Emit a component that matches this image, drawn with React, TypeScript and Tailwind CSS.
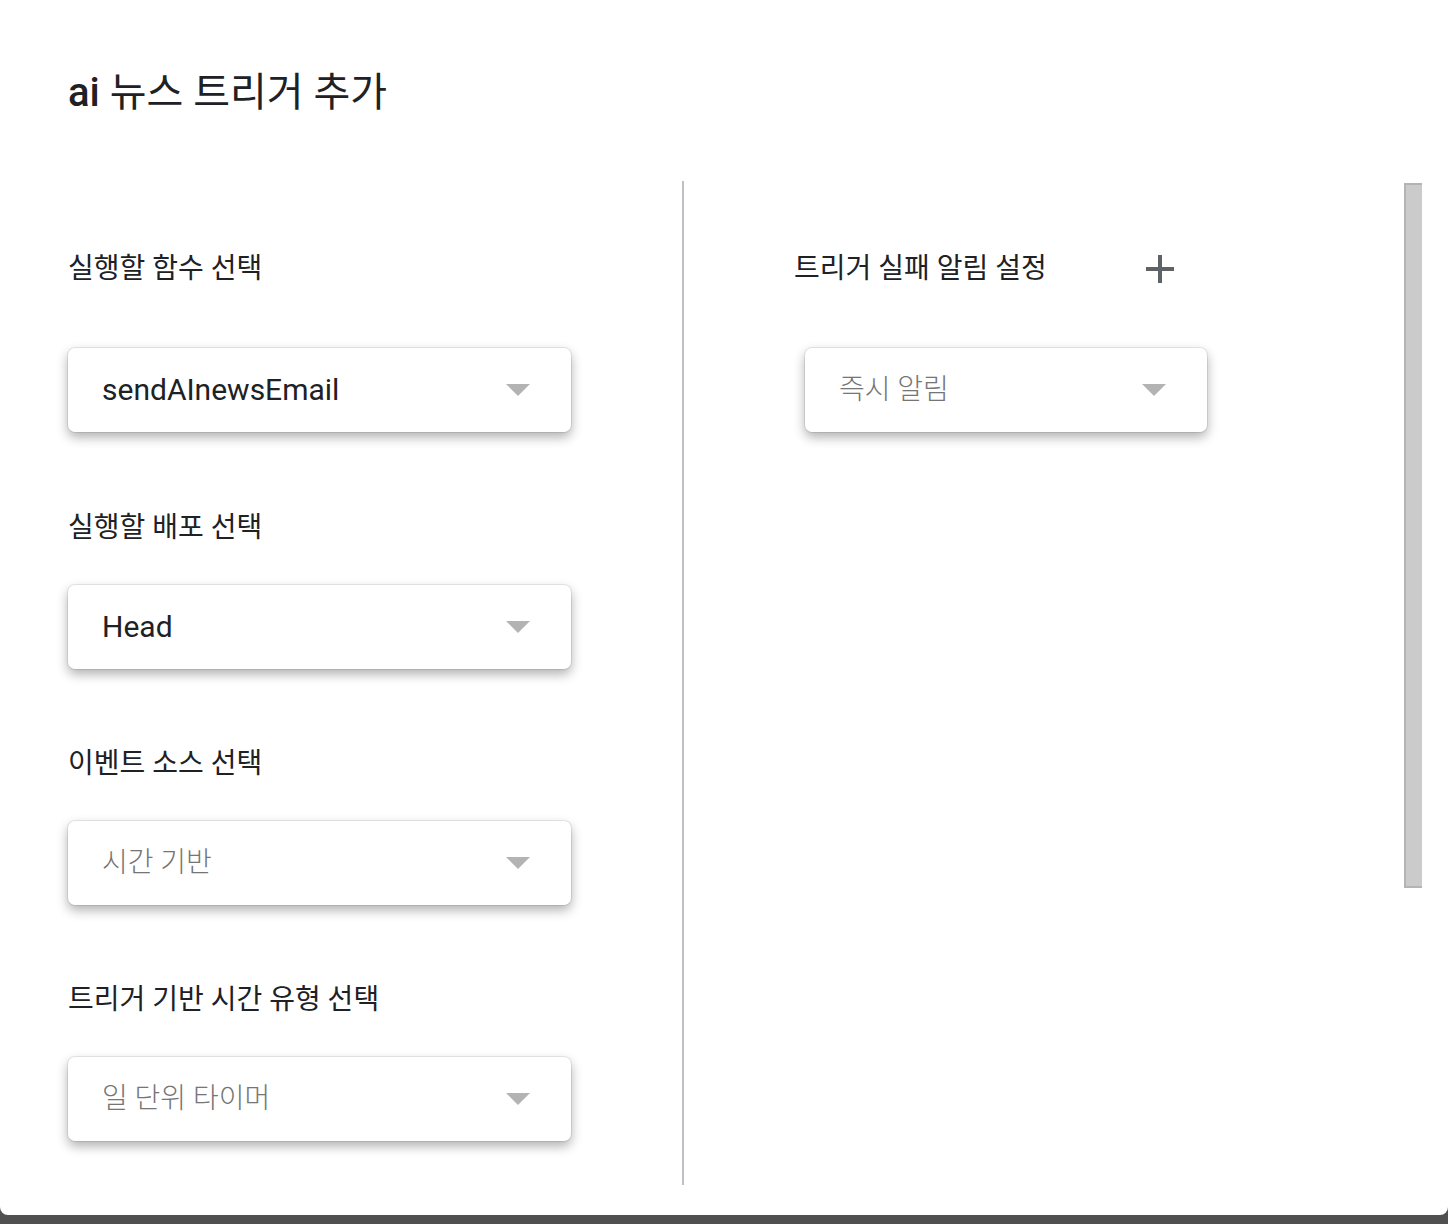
import React from "react"

const font = { fontFamily: 'Roboto, "Noto Sans CJK KR", sans-serif' }

function Caret() {
  return (
    <svg width="24" height="12" viewBox="0 0 24 12" className="shrink-0">
      <path d="M0 0 L24 0 L12 12 Z" fill="#b3b3b3" />
    </svg>
  )
}

function Select({ value, placeholder, width }: { value: string; placeholder?: boolean; width: string }) {
  return (
    <div
      className={`${width} flex h-[84px] items-center justify-between rounded-[7px] bg-white pl-[34px] pr-[41px] shadow-[0_0_0_1px_rgba(0,0,0,0.08),0_5px_12px_rgba(0,0,0,0.32)]`}
    >
      <span
        className={
          placeholder
            ? "text-[28px] font-light leading-none text-[#757575]"
            : "text-[30px] leading-none text-[#202124]"
        }
      >
        {value}
      </span>
      <Caret />
    </div>
  )
}

function Label({ children }: { children: React.ReactNode }) {
  return <div className="text-[28px] leading-[36px] text-[#202124]">{children}</div>
}

export default function App() {
  return (
    <div className="flex h-[1224px] w-[1448px] flex-col bg-[#505050]" style={font}>
      <div className="relative h-[1215px] overflow-hidden rounded-b-[8px] bg-white">
        {/* Header */}
        <h1 className="pl-[68px] pt-[70px] text-[40px] leading-[46px] text-[#202124]">
          <span className="font-medium">ai</span> 뉴스 트리거 추가
        </h1>

        {/* Body */}
        <div className="mt-[65px] flex h-[1004px]">
          <div className="flex w-[682px] flex-col pl-[68px] pt-[70px]">
            <Label>실행할 함수 선택</Label>
            <div className="mt-[61px]">
              <Select value="sendAInewsEmail" width="w-[503px]" />
            </div>

            <div className="mt-[78px]">
              <Label>실행할 배포 선택</Label>
            </div>
            <div className="mt-[39px]">
              <Select value="Head" width="w-[503px]" />
            </div>

            <div className="mt-[77px]">
              <Label>이벤트 소스 선택</Label>
            </div>
            <div className="mt-[39px]">
              <Select value="시간 기반" placeholder width="w-[503px]" />
            </div>

            <div className="mt-[77px]">
              <Label>트리거 기반 시간 유형 선택</Label>
            </div>
            <div className="mt-[39px]">
              <Select value="일 단위 타이머" placeholder width="w-[503px]" />
            </div>
          </div>

          <div className="h-full w-[2px] bg-[#bdc1c6]" />

          <div className="flex flex-col pl-[110px] pt-[70px]">
            <div className="flex items-center">
              <div className="w-[352px]">
                <Label>트리거 실패 알림 설정</Label>
              </div>
              <svg width="28" height="28" viewBox="0 0 28 28">
                <path d="M14 0 V28 M0 14 H28" stroke="#5f6368" strokeWidth="4" />
              </svg>
            </div>
            <div className="mt-[41px] w-fit overflow-hidden pb-[24px] pl-[11px] pr-[20px] pt-[20px]">
              <Select value="즉시 알림" placeholder width="w-[402px]" />
            </div>
          </div>
        </div>

        {/* Scrollbar */}
        <div className="absolute left-[1404px] top-[183px] h-[705px] w-[18px] border-b-2 border-l-2 border-t-2 border-[#b4b4b4] bg-[#cbcbcb]" />
      </div>
    </div>
  )
}
